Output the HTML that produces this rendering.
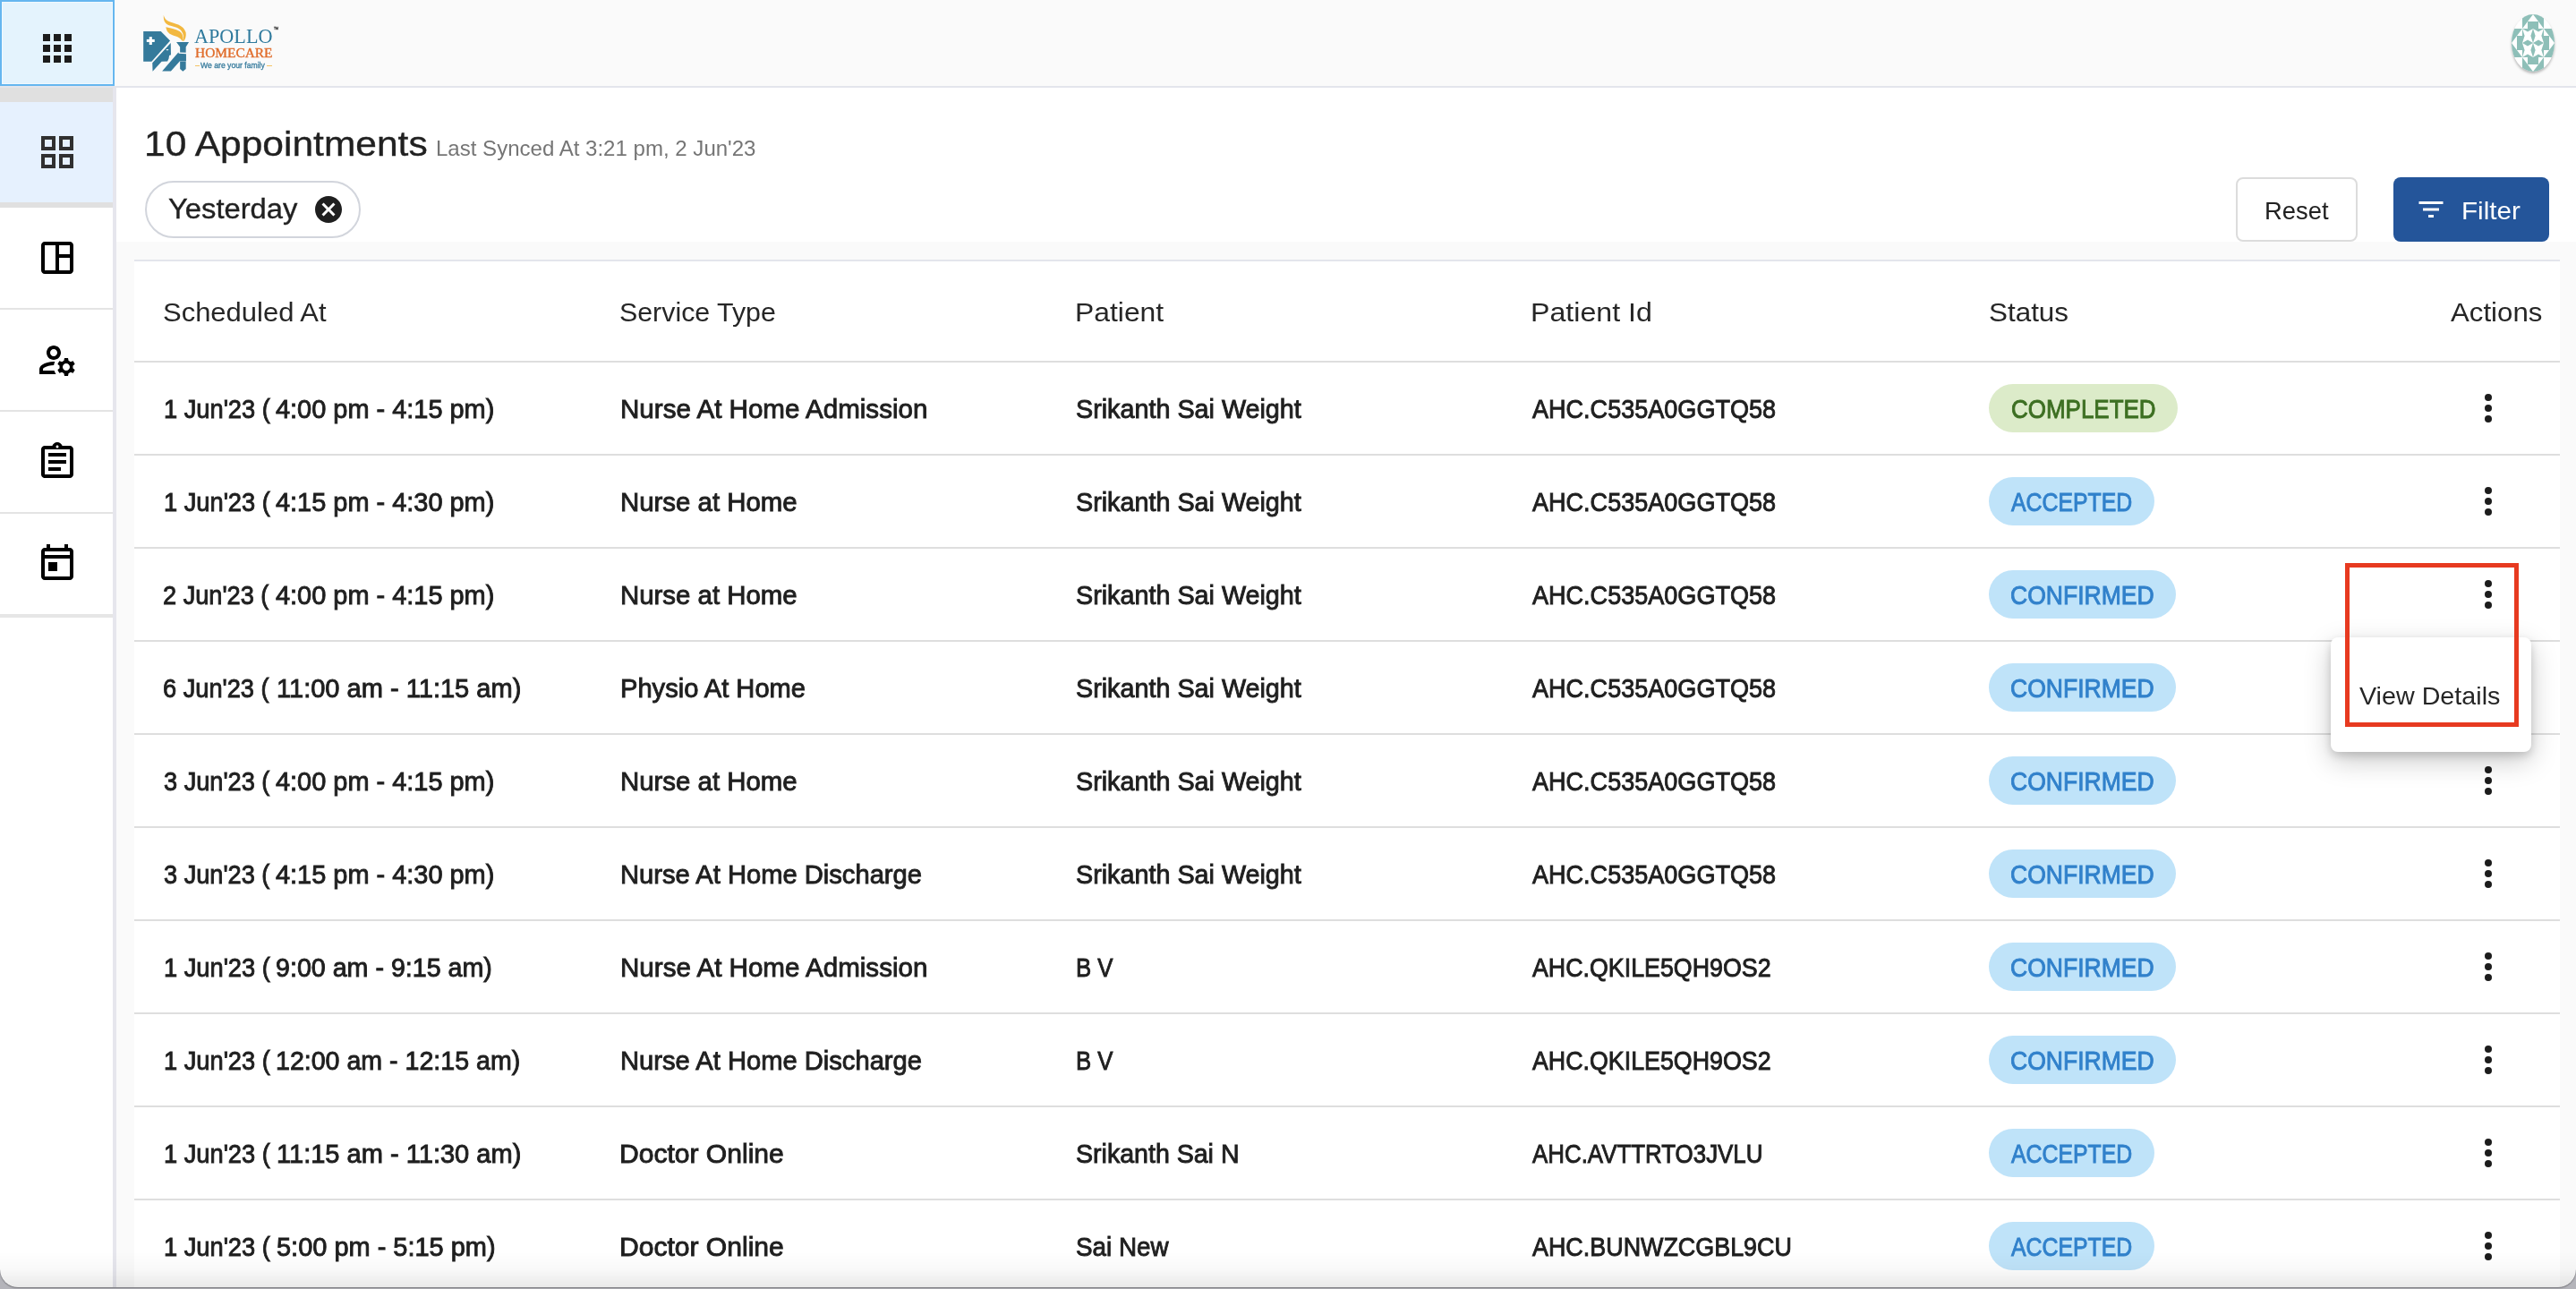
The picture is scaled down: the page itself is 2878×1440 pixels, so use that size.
<!DOCTYPE html>
<html><head><meta charset="utf-8"><title>Appointments</title>
<style>
html,body{margin:0;padding:0}
body{width:2878px;height:1440px;overflow:hidden;position:relative;background:#fafafa;font-family:"Liberation Sans", sans-serif;}
.abs{position:absolute}
.t{position:absolute;transform-origin:0 0;white-space:pre;line-height:1;font-family:"Liberation Sans", sans-serif;font-weight:400}
#hdr{position:absolute;left:0;top:0;width:2878px;height:96px;background:#fafafa;border-bottom:2px solid #e3e5ec}
#apps{position:absolute;left:0;top:0;width:124px;height:92px;background:#e4f3fd;border:2px solid #65b6ef;box-shadow:inset 0 0 0 1px rgba(255,255,255,.45)}
#side{position:absolute;left:0;top:98px;width:126px;height:1342px;background:#fff;border-right:4px solid #e6e6ed}
.strip{position:absolute;left:0;width:126px;background:#e0e0e0}
.sel{position:absolute;left:0;top:114px;width:126px;height:112px;background:#e6f1fe}
.sep{position:absolute;left:0;width:126px;height:2px;background:#e4e4e4}
.ico{position:absolute;left:40px;width:48px;height:48px}
#top{position:absolute;left:130px;top:98px;width:2748px;height:172px;background:#fff}
#chipbox{position:absolute;left:162px;top:202px;width:236.5px;height:59.5px;border:2px solid #d2d5dc;border-radius:32px;background:#fff}
#resetbtn{position:absolute;left:2498px;top:198px;width:132px;height:68px;border:2px solid #dcdcdc;border-radius:8px;background:#fff}
#filterbtn{position:absolute;left:2674px;top:198px;width:174px;height:72px;border-radius:8px;background:#24559a}
#table{position:absolute;left:150px;top:290px;width:2710px;height:1148px;background:#fff;border-top:2px solid #e3e5ec}
.rl{position:absolute;left:150px;width:2710px;height:2px;background:#dedede}
.badge{position:absolute;left:2222px;height:54px;border-radius:27px}
.dots{position:absolute;left:2756px;width:48px;height:48px;fill:#1c1c1c}
#txt{position:absolute;left:0;top:0;width:2878px;height:1440px;will-change:transform}
#pop{position:absolute;left:2604px;top:712px;width:224px;height:128px;background:#fff;border-radius:8px;box-shadow:0 10px 30px rgba(0,0,0,.21),0 4px 10px rgba(0,0,0,.15)}
#red{position:absolute;left:2620px;top:629px;width:184px;height:173px;border:5px solid #e73a20}
#botw{position:absolute;left:0;top:1398px;width:2878px;height:42px;overflow:hidden}
#bot{position:absolute;left:0;top:0;width:2878px;height:39.6px;border-radius:0 0 20px 20px;background:linear-gradient(to bottom,rgba(0,0,0,0) 0%,rgba(0,0,0,.025) 50%,rgba(0,0,0,.085) 100%);box-shadow:0 1px 1.5px 0 #77777c,0 0 0 30px #b4b4ba}
</style></head><body>
<div id="hdr"></div>
<div id="apps"></div>
<svg class="abs" style="left:40px;top:30px" width="48" height="48" viewBox="0 0 24 24" fill="#1c1c1c"><path d="M4 8h4V4H4v4zm6 12h4v-4h-4v4zm-6 0h4v-4H4v4zm0-6h4v-4H4v4zm6 0h4v-4h-4v4zm6-10v4h4V4h-4zm-6 4h4V4h-4v4zm6 6h4v-4h-4v4zm0 6h4v-4h-4v4z"/></svg>
<svg class="abs" style="left:156px;top:12px" width="60" height="72" viewBox="0 0 1074 1289">
<g fill="#357a9b">
<polygon points="75,412 425,412 610,600 240,1015 75,1015"/>
<polygon points="622,643 626,880 592,895 582,960 556,1012 440,1018 260,1212 255,1045"/>
<polygon points="450,1210 625,1210 805,1005 930,1005 930,862 785,855 775,832"/>
<polygon points="735,628 985,628 925,725 925,835 808,832 808,725"/>
<polygon points="808,1010 925,1010 925,1165 865,1215 808,1165"/>
</g>
<rect x="140" y="572" width="160" height="54" fill="#fff"/><rect x="192" y="522" width="56" height="158" fill="#fff"/>
<rect x="530" y="768" width="48" height="22" rx="10" fill="#e8f0f4"/>
<g fill="#f2b840">
<path d="M480,85 C500,180 560,210 680,245 C820,285 900,340 925,440 C935,510 915,570 885,605 L862,605 C890,540 880,470 840,410 C790,340 700,320 620,300 C530,275 470,230 480,85 Z"/>
<path d="M525,325 C600,340 720,365 800,410 C860,450 880,530 865,600 L848,600 C820,540 760,520 680,495 C590,465 540,420 525,325 Z"/>
</g>
</svg>
<div class="abs" style="left:217.8px;top:73.1px;width:5.6px;height:1.3px;background:#f4c466"></div>
<div class="abs" style="left:297.8px;top:73.1px;width:5.9px;height:1.3px;background:#f4c466"></div>

<div class="abs" style="left:2806px;top:16px;width:48px;height:64px;border-radius:50%;overflow:hidden;background:#fff;box-shadow:0 2px 3px rgba(0,0,0,.28)"><svg width="48" height="64" viewBox="0 0 4 4" preserveAspectRatio="none" style="display:block" fill="#8ebfb8" shape-rendering="geometricPrecision"><polygon points="1.000,0.000 2.000,0.000 1.000,1.000"/><polygon points="1.500,0.500 2.000,0.500 2.000,1.000 1.500,1.000"/><polygon points="3.000,0.000 2.000,0.000 3.000,1.000"/><polygon points="2.500,0.500 2.000,0.500 2.000,1.000 2.500,1.000"/><polygon points="0.000,1.000 1.000,1.000 0.000,2.000"/><polygon points="0.500,1.500 1.000,1.500 1.000,2.000 0.500,2.000"/><polygon points="0.000,3.000 1.000,3.000 0.000,2.000"/><polygon points="0.500,2.500 1.000,2.500 1.000,2.000 0.500,2.000"/><polygon points="4.000,1.000 3.000,1.000 4.000,2.000"/><polygon points="3.500,1.500 3.000,1.500 3.000,2.000 3.500,2.000"/><polygon points="4.000,3.000 3.000,3.000 4.000,2.000"/><polygon points="3.500,2.500 3.000,2.500 3.000,2.000 3.500,2.000"/><polygon points="1.000,4.000 2.000,4.000 1.000,3.000"/><polygon points="1.500,3.500 2.000,3.500 2.000,3.000 1.500,3.000"/><polygon points="3.000,4.000 2.000,4.000 3.000,3.000"/><polygon points="2.500,3.500 2.000,3.500 2.000,3.000 2.500,3.000"/><rect x="1" y="1" width="1" height="1"/><polygon fill="#fff" points="1.000,1.000 1.500,1.220 2.000,1.000 1.780,1.500 2.000,2.000 1.500,1.780 1.000,2.000 1.220,1.500"/><rect x="1" y="2" width="1" height="1"/><polygon fill="#fff" points="1.000,2.000 1.500,2.220 2.000,2.000 1.780,2.500 2.000,3.000 1.500,2.780 1.000,3.000 1.220,2.500"/><rect x="2" y="1" width="1" height="1"/><polygon fill="#fff" points="2.000,1.000 2.500,1.220 3.000,1.000 2.780,1.500 3.000,2.000 2.500,1.780 2.000,2.000 2.220,1.500"/><rect x="2" y="2" width="1" height="1"/><polygon fill="#fff" points="2.000,2.000 2.500,2.220 3.000,2.000 2.780,2.500 3.000,3.000 2.500,2.780 2.000,3.000 2.220,2.500"/></svg></div>
<div id="side"></div>
<div class="strip" style="top:98px;height:16px"></div>
<div class="sel"></div>
<div class="strip" style="top:226px;height:6px"></div>
<div class="sep" style="top:344px"></div>
<div class="sep" style="top:458px"></div>
<div class="sep" style="top:572px"></div>
<div class="sep" style="top:686px;height:4px;background:#e6e6e6"></div>
<svg class="ico" style="top:146px" viewBox="0 0 24 24" fill="#303030"><path d="M3 3v8h8V3H3zm6 6H5V5h4v4zm-6 4v8h8v-8H3zm6 6H5v-4h4v4zm4-16v8h8V3h-8zm6 6h-4V5h4v4zm-6 4v8h8v-8h-8zm6 6h-4v-4h4v4z"/></svg>
<svg class="ico" style="top:264px" viewBox="0 0 24 24" fill="#000"><path d="M19 3H5c-1.100 0-2 .900-2 2v14c0 1.100.900 2 2 2h14c1.100 0 2-.900 2-2V5c0-1.100-.900-2-2-2zM5 19V5h6v14H5zm14 0h-6v-7h6v7zm0-9h-6V5h6v5z"/></svg>
<svg class="ico" style="top:378px" viewBox="0 0 24 24" fill="#000"><path d="M4 18v-.650c0-.340.160-.660.410-.810C6.100 15.530 8.030 15 10 15c.030 0 .050 0 .080.010.100-.700.300-1.370.590-1.980-.220-.020-.440-.030-.670-.030-2.420 0-4.680.670-6.610 1.820-.880.520-1.390 1.500-1.390 2.530V20h9.260c-.420-.600-.750-1.280-.970-2H4zM10 12c2.210 0 4-1.790 4-4s-1.790-4-4-4-4 1.790-4 4 1.790 4 4 4zm0-6c1.100 0 2 .900 2 2s-.900 2-2 2-2-.900-2-2 .900-2 2-2zM20.750 16c0-.220-.030-.420-.060-.630l1.140-1.010-1-1.730-1.450.490c-.320-.270-.680-.480-1.080-.630L18 11h-2l-.300 1.490c-.400.150-.760.360-1.080.630l-1.450-.490-1 1.730 1.140 1.010c-.030.210-.060.410-.060.630s.030.420.060.630l-1.140 1.010 1 1.730 1.450-.490c.320.270.680.480 1.080.630L16 21h2l.300-1.490c.400-.150.760-.360 1.080-.630l1.450.490 1-1.730-1.140-1.010c.030-.210.060-.410.060-.630zM17 18c-1.100 0-2-.900-2-2s.900-2 2-2 2 .900 2 2-.900 2-2 2z"/></svg>
<svg class="ico" style="top:492px" viewBox="0 0 24 24" fill="#000"><path d="M7 15h7v2H7zm0-4h10v2H7zm0-4h10v2H7zm12-4h-4.180C14.400 1.840 13.300 1 12 1c-1.300 0-2.400.840-2.820 2H5c-.140 0-.270.010-.400.040-.390.080-.740.280-1.010.550-.180.180-.330.400-.430.640-.100.230-.160.490-.160.770v14c0 .270.060.540.160.780s.250.450.430.640c.270.270.620.470 1.010.550.130.020.260.030.400.030h14c1.100 0 2-.900 2-2V5c0-1.100-.900-2-2-2zm-7-.250c.410 0 .750.340.750.750s-.340.750-.750.750-.750-.340-.750-.750.340-.750.750-.750zM19 19H5V5h14v14z"/></svg>
<svg class="ico" style="top:606px" viewBox="0 0 24 24" fill="#000"><path d="M19 3h-1V1h-2v2H8V1H6v2H5c-1.110 0-1.990.900-1.990 2L3 19c0 1.100.890 2 2 2h14c1.100 0 2-.900 2-2V5c0-1.100-.900-2-2-2zm0 16H5V9h14v10zm0-12H5V5h14v2zM7 11h5v5H7z"/></svg>
<div id="top"></div>
<div id="chipbox"></div>
<svg class="abs" style="left:349px;top:216px" width="36" height="36" viewBox="0 0 24 24" fill="#1f1f1f"><path d="M12 2C6.470 2 2 6.470 2 12s4.470 10 10 10 10-4.470 10-10S17.530 2 12 2zm5 13.590L15.590 17 12 13.410 8.410 17 7 15.590 10.590 12 7 8.410 8.410 7 12 10.590 15.590 7 17 8.410 13.410 12 17 15.590z"/></svg>
<div id="resetbtn"></div>
<div id="filterbtn"></div>
<svg class="abs" style="left:2698px;top:216px" width="36" height="36" viewBox="0 0 24 24" fill="#fff"><path d="M10 18h4v-2h-4v2zM3 6v2h18V6H3zm3 7h12v-2H6v2z"/></svg>
<div id="table"></div>
<div class="rl" style="top:403px"></div>
<div class="rl" style="top:507px"></div>
<div class="rl" style="top:611px"></div>
<div class="rl" style="top:715px"></div>
<div class="rl" style="top:819px"></div>
<div class="rl" style="top:923px"></div>
<div class="rl" style="top:1027px"></div>
<div class="rl" style="top:1131px"></div>
<div class="rl" style="top:1235px"></div>
<div class="rl" style="top:1339px"></div>
<div class="badge" style="top:429.0px;width:210.6px;background:#dcebc9"></div>
<div class="badge" style="top:533.0px;width:185.0px;background:#bfe3f9"></div>
<div class="badge" style="top:637.0px;width:209.0px;background:#bfe3f9"></div>
<div class="badge" style="top:741.0px;width:209.0px;background:#bfe3f9"></div>
<div class="badge" style="top:845.0px;width:209.0px;background:#bfe3f9"></div>
<div class="badge" style="top:949.0px;width:209.0px;background:#bfe3f9"></div>
<div class="badge" style="top:1053.0px;width:209.0px;background:#bfe3f9"></div>
<div class="badge" style="top:1157.0px;width:209.0px;background:#bfe3f9"></div>
<div class="badge" style="top:1261.0px;width:185.0px;background:#bfe3f9"></div>
<div class="badge" style="top:1365.0px;width:185.0px;background:#bfe3f9"></div>
<svg class="dots" style="top:432.0px" viewBox="0 0 48 48"><circle cx="24" cy="12" r="4"/><circle cx="24" cy="24" r="4"/><circle cx="24" cy="36" r="4"/></svg>
<svg class="dots" style="top:536.0px" viewBox="0 0 48 48"><circle cx="24" cy="12" r="4"/><circle cx="24" cy="24" r="4"/><circle cx="24" cy="36" r="4"/></svg>
<svg class="dots" style="top:640.0px" viewBox="0 0 48 48"><circle cx="24" cy="12" r="4"/><circle cx="24" cy="24" r="4"/><circle cx="24" cy="36" r="4"/></svg>
<svg class="dots" style="top:744.0px" viewBox="0 0 48 48"><circle cx="24" cy="12" r="4"/><circle cx="24" cy="24" r="4"/><circle cx="24" cy="36" r="4"/></svg>
<svg class="dots" style="top:848.0px" viewBox="0 0 48 48"><circle cx="24" cy="12" r="4"/><circle cx="24" cy="24" r="4"/><circle cx="24" cy="36" r="4"/></svg>
<svg class="dots" style="top:952.0px" viewBox="0 0 48 48"><circle cx="24" cy="12" r="4"/><circle cx="24" cy="24" r="4"/><circle cx="24" cy="36" r="4"/></svg>
<svg class="dots" style="top:1056.0px" viewBox="0 0 48 48"><circle cx="24" cy="12" r="4"/><circle cx="24" cy="24" r="4"/><circle cx="24" cy="36" r="4"/></svg>
<svg class="dots" style="top:1160.0px" viewBox="0 0 48 48"><circle cx="24" cy="12" r="4"/><circle cx="24" cy="24" r="4"/><circle cx="24" cy="36" r="4"/></svg>
<svg class="dots" style="top:1264.0px" viewBox="0 0 48 48"><circle cx="24" cy="12" r="4"/><circle cx="24" cy="24" r="4"/><circle cx="24" cy="36" r="4"/></svg>
<svg class="dots" style="top:1368.0px" viewBox="0 0 48 48"><circle cx="24" cy="12" r="4"/><circle cx="24" cy="24" r="4"/><circle cx="24" cy="36" r="4"/></svg>
<div id="pop"></div>
<div id="txt">
<span id="h1" class="t" style="left:160.67px;top:140.56px;font-size:39.5px;color:#212121;transform:scaleX(1.0761);-webkit-text-stroke:0.35px #212121;">10 Appointments</span>
<span id="sync" class="t" style="left:487.09px;top:153.68px;font-size:24px;color:#757575;transform:scaleX(1.0018);">Last Synced At 3:21 pm, 2 Jun'23</span>
<span id="chip" class="t" style="left:187.97px;top:218.06px;font-size:31px;color:#212121;transform:scaleX(1.0555);-webkit-text-stroke:0.35px #212121;">Yesterday</span>
<span id="reset" class="t" style="left:2530.30px;top:221.50px;font-size:28px;color:#212121;transform:scaleX(0.9774);">Reset</span>
<span id="filter" class="t" style="left:2750.45px;top:221.50px;font-size:28px;color:#ffffff;transform:scaleX(1.0595);">Filter</span>
<span id="lg1" class="t" style="left:217.10px;top:30.14px;font-size:22.4px;color:#2f7a9d;transform:scaleX(0.9904);font-family:'Liberation Serif',serif;">APOLLO</span>
<span id="lg2" class="t" style="left:217.57px;top:52.96px;font-size:13.9px;color:#e06d2c;transform:scaleX(1.1096);-webkit-text-stroke:0.35px #e06d2c;font-family:'Liberation Serif',serif;">HOMECARE</span>
<span id="lg3" class="t" style="left:224.27px;top:67.80px;font-size:9.8px;color:#3a7d9e;transform:scaleX(0.8819);-webkit-text-stroke:0.35px #3a7d9e;">We are your family</span>
<span id="lg4" class="t" style="left:305.97px;top:31.25px;font-size:3.6px;color:#444;transform:scaleX(0.9336);-webkit-text-stroke:0.35px #444;">TM</span>
<span id="th0" class="t" style="left:182.12px;top:333.81px;font-size:30px;color:#262626;transform:scaleX(1.0324);">Scheduled At</span>
<span id="th1" class="t" style="left:691.80px;top:333.81px;font-size:30px;color:#262626;transform:scaleX(1.0116);">Service Type</span>
<span id="th2" class="t" style="left:1201.19px;top:333.81px;font-size:30px;color:#262626;transform:scaleX(1.0618);">Patient</span>
<span id="th3" class="t" style="left:1709.94px;top:333.81px;font-size:30px;color:#262626;transform:scaleX(1.0719);">Patient Id</span>
<span id="th4" class="t" style="left:2222.02px;top:333.81px;font-size:30px;color:#262626;transform:scaleX(1.0469);">Status</span>
<span id="th5" class="t" style="left:2738.19px;top:333.81px;font-size:30px;color:#262626;transform:scaleX(1.0406);">Actions</span>
<span id="r0c0a" class="t" style="left:182.76px;top:442.21px;font-size:30px;color:#1f1f1f;transform:scaleX(0.9079);-webkit-text-stroke:0.95px #1f1f1f;">1 Jun'23 (</span>
<span id="r0c0b" class="t" style="left:308.11px;top:442.21px;font-size:30px;color:#1f1f1f;transform:scaleX(0.9641);-webkit-text-stroke:0.95px #1f1f1f;">4:00 pm - 4:15 pm)</span>
<span id="r0c1" class="t" style="left:692.55px;top:442.21px;font-size:30px;color:#1f1f1f;transform:scaleX(0.9854);-webkit-text-stroke:0.95px #1f1f1f;">Nurse At Home Admission</span>
<span id="r0c2" class="t" style="left:1201.56px;top:442.21px;font-size:30px;color:#1f1f1f;transform:scaleX(0.9578);-webkit-text-stroke:0.95px #1f1f1f;">Srikanth Sai Weight</span>
<span id="r0c3" class="t" style="left:1712.07px;top:442.21px;font-size:30px;color:#1f1f1f;transform:scaleX(0.9015);-webkit-text-stroke:0.95px #1f1f1f;">AHC.C535A0GGTQ58</span>
<span id="r0st" class="t" style="left:2246.52px;top:442.99px;font-size:28.6px;color:#3d6f22;transform:scaleX(0.9083);-webkit-text-stroke:0.9px #3d6f22;">COMPLETED</span>
<span id="r1c0a" class="t" style="left:182.76px;top:546.21px;font-size:30px;color:#1f1f1f;transform:scaleX(0.9079);-webkit-text-stroke:0.95px #1f1f1f;">1 Jun'23 (</span>
<span id="r1c0b" class="t" style="left:308.11px;top:546.21px;font-size:30px;color:#1f1f1f;transform:scaleX(0.9641);-webkit-text-stroke:0.95px #1f1f1f;">4:15 pm - 4:30 pm)</span>
<span id="r1c1" class="t" style="left:692.56px;top:546.21px;font-size:30px;color:#1f1f1f;transform:scaleX(0.9797);-webkit-text-stroke:0.95px #1f1f1f;">Nurse at Home</span>
<span id="r1c2" class="t" style="left:1201.56px;top:546.21px;font-size:30px;color:#1f1f1f;transform:scaleX(0.9578);-webkit-text-stroke:0.95px #1f1f1f;">Srikanth Sai Weight</span>
<span id="r1c3" class="t" style="left:1712.07px;top:546.21px;font-size:30px;color:#1f1f1f;transform:scaleX(0.9015);-webkit-text-stroke:0.95px #1f1f1f;">AHC.C535A0GGTQ58</span>
<span id="r1st" class="t" style="left:2246.93px;top:546.99px;font-size:28.6px;color:#3181cb;transform:scaleX(0.8682);-webkit-text-stroke:0.9px #3181cb;">ACCEPTED</span>
<span id="r2c0a" class="t" style="left:182.11px;top:650.21px;font-size:30px;color:#1f1f1f;transform:scaleX(0.9052);-webkit-text-stroke:0.95px #1f1f1f;">2 Jun'23 (</span>
<span id="r2c0b" class="t" style="left:308.11px;top:650.21px;font-size:30px;color:#1f1f1f;transform:scaleX(0.9641);-webkit-text-stroke:0.95px #1f1f1f;">4:00 pm - 4:15 pm)</span>
<span id="r2c1" class="t" style="left:692.56px;top:650.21px;font-size:30px;color:#1f1f1f;transform:scaleX(0.9797);-webkit-text-stroke:0.95px #1f1f1f;">Nurse at Home</span>
<span id="r2c2" class="t" style="left:1201.56px;top:650.21px;font-size:30px;color:#1f1f1f;transform:scaleX(0.9578);-webkit-text-stroke:0.95px #1f1f1f;">Srikanth Sai Weight</span>
<span id="r2c3" class="t" style="left:1712.07px;top:650.21px;font-size:30px;color:#1f1f1f;transform:scaleX(0.9015);-webkit-text-stroke:0.95px #1f1f1f;">AHC.C535A0GGTQ58</span>
<span id="r2st" class="t" style="left:2246.47px;top:650.99px;font-size:28.6px;color:#3181cb;transform:scaleX(0.9281);-webkit-text-stroke:0.9px #3181cb;">CONFIRMED</span>
<span id="r3c0a" class="t" style="left:181.95px;top:754.21px;font-size:30px;color:#1f1f1f;transform:scaleX(0.9064);-webkit-text-stroke:0.95px #1f1f1f;">6 Jun'23 (</span>
<span id="r3c0b" class="t" style="left:309.14px;top:754.21px;font-size:30px;color:#1f1f1f;transform:scaleX(0.9681);-webkit-text-stroke:0.95px #1f1f1f;">11:00 am - 11:15 am)</span>
<span id="r3c1" class="t" style="left:692.65px;top:754.21px;font-size:30px;color:#1f1f1f;transform:scaleX(0.9698);-webkit-text-stroke:0.95px #1f1f1f;">Physio At Home</span>
<span id="r3c2" class="t" style="left:1201.56px;top:754.21px;font-size:30px;color:#1f1f1f;transform:scaleX(0.9578);-webkit-text-stroke:0.95px #1f1f1f;">Srikanth Sai Weight</span>
<span id="r3c3" class="t" style="left:1712.07px;top:754.21px;font-size:30px;color:#1f1f1f;transform:scaleX(0.9015);-webkit-text-stroke:0.95px #1f1f1f;">AHC.C535A0GGTQ58</span>
<span id="r3st" class="t" style="left:2246.47px;top:754.99px;font-size:28.6px;color:#3181cb;transform:scaleX(0.9281);-webkit-text-stroke:0.9px #3181cb;">CONFIRMED</span>
<span id="r4c0a" class="t" style="left:183.15px;top:858.21px;font-size:30px;color:#1f1f1f;transform:scaleX(0.9048);-webkit-text-stroke:0.95px #1f1f1f;">3 Jun'23 (</span>
<span id="r4c0b" class="t" style="left:308.11px;top:858.21px;font-size:30px;color:#1f1f1f;transform:scaleX(0.9641);-webkit-text-stroke:0.95px #1f1f1f;">4:00 pm - 4:15 pm)</span>
<span id="r4c1" class="t" style="left:692.56px;top:858.21px;font-size:30px;color:#1f1f1f;transform:scaleX(0.9797);-webkit-text-stroke:0.95px #1f1f1f;">Nurse at Home</span>
<span id="r4c2" class="t" style="left:1201.56px;top:858.21px;font-size:30px;color:#1f1f1f;transform:scaleX(0.9578);-webkit-text-stroke:0.95px #1f1f1f;">Srikanth Sai Weight</span>
<span id="r4c3" class="t" style="left:1712.07px;top:858.21px;font-size:30px;color:#1f1f1f;transform:scaleX(0.9015);-webkit-text-stroke:0.95px #1f1f1f;">AHC.C535A0GGTQ58</span>
<span id="r4st" class="t" style="left:2246.47px;top:858.99px;font-size:28.6px;color:#3181cb;transform:scaleX(0.9281);-webkit-text-stroke:0.9px #3181cb;">CONFIRMED</span>
<span id="r5c0a" class="t" style="left:183.15px;top:962.21px;font-size:30px;color:#1f1f1f;transform:scaleX(0.9048);-webkit-text-stroke:0.95px #1f1f1f;">3 Jun'23 (</span>
<span id="r5c0b" class="t" style="left:308.11px;top:962.21px;font-size:30px;color:#1f1f1f;transform:scaleX(0.9641);-webkit-text-stroke:0.95px #1f1f1f;">4:15 pm - 4:30 pm)</span>
<span id="r5c1" class="t" style="left:692.62px;top:962.21px;font-size:30px;color:#1f1f1f;transform:scaleX(0.9717);-webkit-text-stroke:0.95px #1f1f1f;">Nurse At Home Discharge</span>
<span id="r5c2" class="t" style="left:1201.56px;top:962.21px;font-size:30px;color:#1f1f1f;transform:scaleX(0.9578);-webkit-text-stroke:0.95px #1f1f1f;">Srikanth Sai Weight</span>
<span id="r5c3" class="t" style="left:1712.07px;top:962.21px;font-size:30px;color:#1f1f1f;transform:scaleX(0.9015);-webkit-text-stroke:0.95px #1f1f1f;">AHC.C535A0GGTQ58</span>
<span id="r5st" class="t" style="left:2246.47px;top:962.99px;font-size:28.6px;color:#3181cb;transform:scaleX(0.9281);-webkit-text-stroke:0.9px #3181cb;">CONFIRMED</span>
<span id="r6c0a" class="t" style="left:182.76px;top:1066.20px;font-size:30px;color:#1f1f1f;transform:scaleX(0.9079);-webkit-text-stroke:0.95px #1f1f1f;">1 Jun'23 (</span>
<span id="r6c0b" class="t" style="left:307.63px;top:1066.20px;font-size:30px;color:#1f1f1f;transform:scaleX(0.9543);-webkit-text-stroke:0.95px #1f1f1f;">9:00 am - 9:15 am)</span>
<span id="r6c1" class="t" style="left:692.55px;top:1066.20px;font-size:30px;color:#1f1f1f;transform:scaleX(0.9854);-webkit-text-stroke:0.95px #1f1f1f;">Nurse At Home Admission</span>
<span id="r6c2" class="t" style="left:1202.00px;top:1066.20px;font-size:30px;color:#1f1f1f;transform:scaleX(0.8588);-webkit-text-stroke:0.95px #1f1f1f;">B V</span>
<span id="r6c3" class="t" style="left:1712.07px;top:1066.20px;font-size:30px;color:#1f1f1f;transform:scaleX(0.8932);-webkit-text-stroke:0.95px #1f1f1f;">AHC.QKILE5QH9OS2</span>
<span id="r6st" class="t" style="left:2246.47px;top:1066.99px;font-size:28.6px;color:#3181cb;transform:scaleX(0.9281);-webkit-text-stroke:0.9px #3181cb;">CONFIRMED</span>
<span id="r7c0a" class="t" style="left:182.76px;top:1170.20px;font-size:30px;color:#1f1f1f;transform:scaleX(0.9079);-webkit-text-stroke:0.95px #1f1f1f;">1 Jun'23 (</span>
<span id="r7c0b" class="t" style="left:308.27px;top:1170.20px;font-size:30px;color:#1f1f1f;transform:scaleX(0.9526);-webkit-text-stroke:0.95px #1f1f1f;">12:00 am - 12:15 am)</span>
<span id="r7c1" class="t" style="left:692.62px;top:1170.20px;font-size:30px;color:#1f1f1f;transform:scaleX(0.9717);-webkit-text-stroke:0.95px #1f1f1f;">Nurse At Home Discharge</span>
<span id="r7c2" class="t" style="left:1202.00px;top:1170.20px;font-size:30px;color:#1f1f1f;transform:scaleX(0.8588);-webkit-text-stroke:0.95px #1f1f1f;">B V</span>
<span id="r7c3" class="t" style="left:1712.07px;top:1170.20px;font-size:30px;color:#1f1f1f;transform:scaleX(0.8932);-webkit-text-stroke:0.95px #1f1f1f;">AHC.QKILE5QH9OS2</span>
<span id="r7st" class="t" style="left:2246.47px;top:1170.99px;font-size:28.6px;color:#3181cb;transform:scaleX(0.9281);-webkit-text-stroke:0.9px #3181cb;">CONFIRMED</span>
<span id="r8c0a" class="t" style="left:182.76px;top:1274.20px;font-size:30px;color:#1f1f1f;transform:scaleX(0.9079);-webkit-text-stroke:0.95px #1f1f1f;">1 Jun'23 (</span>
<span id="r8c0b" class="t" style="left:309.14px;top:1274.20px;font-size:30px;color:#1f1f1f;transform:scaleX(0.9681);-webkit-text-stroke:0.95px #1f1f1f;">11:15 am - 11:30 am)</span>
<span id="r8c1" class="t" style="left:692.47px;top:1274.20px;font-size:30px;color:#1f1f1f;transform:scaleX(1.0018);-webkit-text-stroke:0.95px #1f1f1f;">Doctor Online</span>
<span id="r8c2" class="t" style="left:1201.59px;top:1274.20px;font-size:30px;color:#1f1f1f;transform:scaleX(0.9519);-webkit-text-stroke:0.95px #1f1f1f;">Srikanth Sai N</span>
<span id="r8c3" class="t" style="left:1712.03px;top:1274.20px;font-size:30px;color:#1f1f1f;transform:scaleX(0.8627);-webkit-text-stroke:0.95px #1f1f1f;">AHC.AVTTRTO3JVLU</span>
<span id="r8st" class="t" style="left:2246.93px;top:1274.99px;font-size:28.6px;color:#3181cb;transform:scaleX(0.8682);-webkit-text-stroke:0.9px #3181cb;">ACCEPTED</span>
<span id="r9c0a" class="t" style="left:182.76px;top:1378.20px;font-size:30px;color:#1f1f1f;transform:scaleX(0.9079);-webkit-text-stroke:0.95px #1f1f1f;">1 Jun'23 (</span>
<span id="r9c0b" class="t" style="left:308.95px;top:1378.20px;font-size:30px;color:#1f1f1f;transform:scaleX(0.9649);-webkit-text-stroke:0.95px #1f1f1f;">5:00 pm - 5:15 pm)</span>
<span id="r9c1" class="t" style="left:692.47px;top:1378.20px;font-size:30px;color:#1f1f1f;transform:scaleX(1.0018);-webkit-text-stroke:0.95px #1f1f1f;">Doctor Online</span>
<span id="r9c2" class="t" style="left:1201.67px;top:1378.20px;font-size:30px;color:#1f1f1f;transform:scaleX(0.9269);-webkit-text-stroke:0.95px #1f1f1f;">Sai New</span>
<span id="r9c3" class="t" style="left:1712.07px;top:1378.20px;font-size:30px;color:#1f1f1f;transform:scaleX(0.8966);-webkit-text-stroke:0.95px #1f1f1f;">AHC.BUNWZCGBL9CU</span>
<span id="r9st" class="t" style="left:2246.93px;top:1378.99px;font-size:28.6px;color:#3181cb;transform:scaleX(0.8682);-webkit-text-stroke:0.9px #3181cb;">ACCEPTED</span>
<span id="vd" class="t" style="left:2635.88px;top:763.07px;font-size:28.5px;color:#262626;transform:scaleX(1.0068);">View Details</span>
</div>
<div id="red"></div>
<div id="botw"><div id="bot"></div></div>
</body></html>
